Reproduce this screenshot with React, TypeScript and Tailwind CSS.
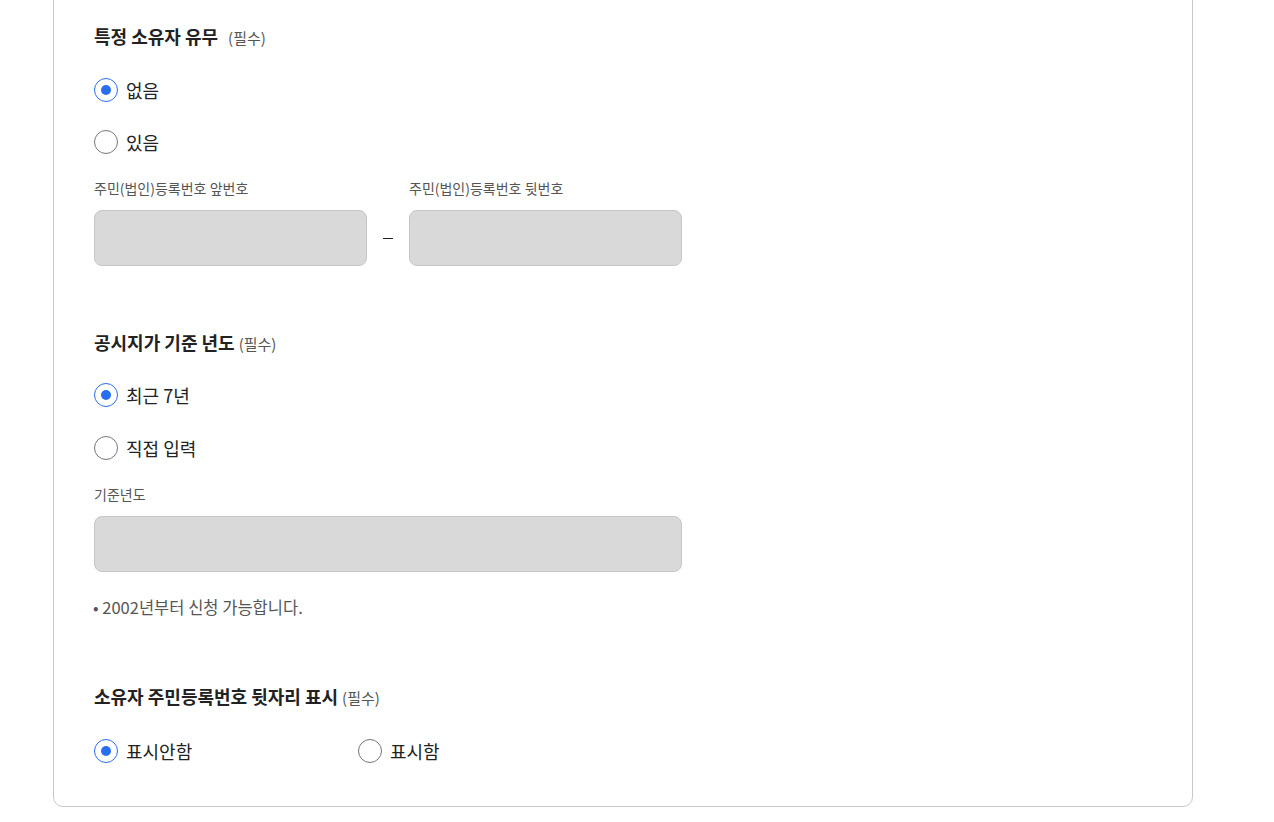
import React, { useState } from 'react'

const font = { fontFamily: '"Noto Sans CJK KR", "Noto Sans", sans-serif' }

function Radio({ checked, label, onClick, className = '' }: { checked: boolean; label: string; onClick: () => void; className?: string }) {
  return (
    <button type="button" onClick={onClick} className={`flex h-[28px] items-center gap-2 text-left ${className}`}>
      <span
        className={`flex h-6 w-6 shrink-0 items-center justify-center rounded-full bg-white ${
          checked ? 'border-[1.5px] border-[#2a6ef0]' : 'border border-[#767676]'
        }`}
      >
        {checked && <span className="h-[10px] w-[10px] rounded-full bg-[#2a6ef0]" />}
      </span>
      <span className="text-[18px] leading-[26px] text-[#222]">{label}</span>
    </button>
  )
}

function Heading({ title, wide }: { title: string; wide?: boolean }) {
  return (
    <h3 className="flex items-baseline text-[18px] font-bold leading-[26px] text-[#222]">
      {title}
      <span className={`text-[15px] font-normal text-[#555] ${wide ? 'ml-[10px]' : 'ml-[4px]'}`}>(필수)</span>
    </h3>
  )
}

function Field({ label, className = '' }: { label: string; className?: string }) {
  return (
    <div className={className}>
      <p className="text-[14px] leading-[18px] text-[#555]">{label}</p>
      <div className="mt-[13px] h-[56px] w-full rounded-lg border border-[#c6c6c6] bg-[#d9d9d9]" />
    </div>
  )
}

export default function App() {
  const [owner, setOwner] = useState('none')
  const [year, setYear] = useState('recent')
  const [show, setShow] = useState('hide')

  return (
    <div className="min-h-screen bg-white" style={font}>
      <div className="ml-[53px] -mt-[40px] w-[1140px] rounded-[10px] border border-[#c8c8c8] px-10 pb-[41px] pt-[62px]">
        {/* 특정 소유자 */}
        <Heading title="특정 소유자 유무" wide />
        <div className="mt-[25px] flex flex-col gap-6">
          <Radio checked={owner === 'none'} label="없음" onClick={() => setOwner('none')} />
          <Radio checked={owner === 'some'} label="있음" onClick={() => setOwner('some')} />
        </div>
        <div className="mt-[23px] flex w-[588px] items-end">
          <Field label="주민(법인)등록번호 앞번호" className="w-[273px]" />
          <div className="flex h-[56px] w-[42px] items-center justify-center">
            <span className="h-px w-[10px] bg-[#222]" />
          </div>
          <Field label="주민(법인)등록번호 뒷번호" className="w-[273px]" />
        </div>

        {/* 공시지가 기준 년도 */}
        <div className="mt-[63px]">
          <Heading title="공시지가 기준 년도" />
        </div>
        <div className="mt-[24px] flex flex-col gap-[25px]">
          <Radio checked={year === 'recent'} label="최근 7년" onClick={() => setYear('recent')} />
          <Radio checked={year === 'manual'} label="직접 입력" onClick={() => setYear('manual')} />
        </div>
        <Field label="기준년도" className="mt-[23px] w-[588px]" />
        <p className="mt-[25px] -ml-px text-[16.5px] leading-[20px] text-[#555]">• 2002년부터 신청 가능합니다.</p>

        {/* 뒷자리 표시 */}
        <div className="mt-[66px]">
          <Heading title="소유자 주민등록번호 뒷자리 표시" />
        </div>
        <div className="mt-[26px] flex">
          <Radio checked={show === 'hide'} label="표시안함" onClick={() => setShow('hide')} className="w-[264px]" />
          <Radio checked={show === 'show'} label="표시함" onClick={() => setShow('show')} />
        </div>
      </div>
    </div>
  )
}
